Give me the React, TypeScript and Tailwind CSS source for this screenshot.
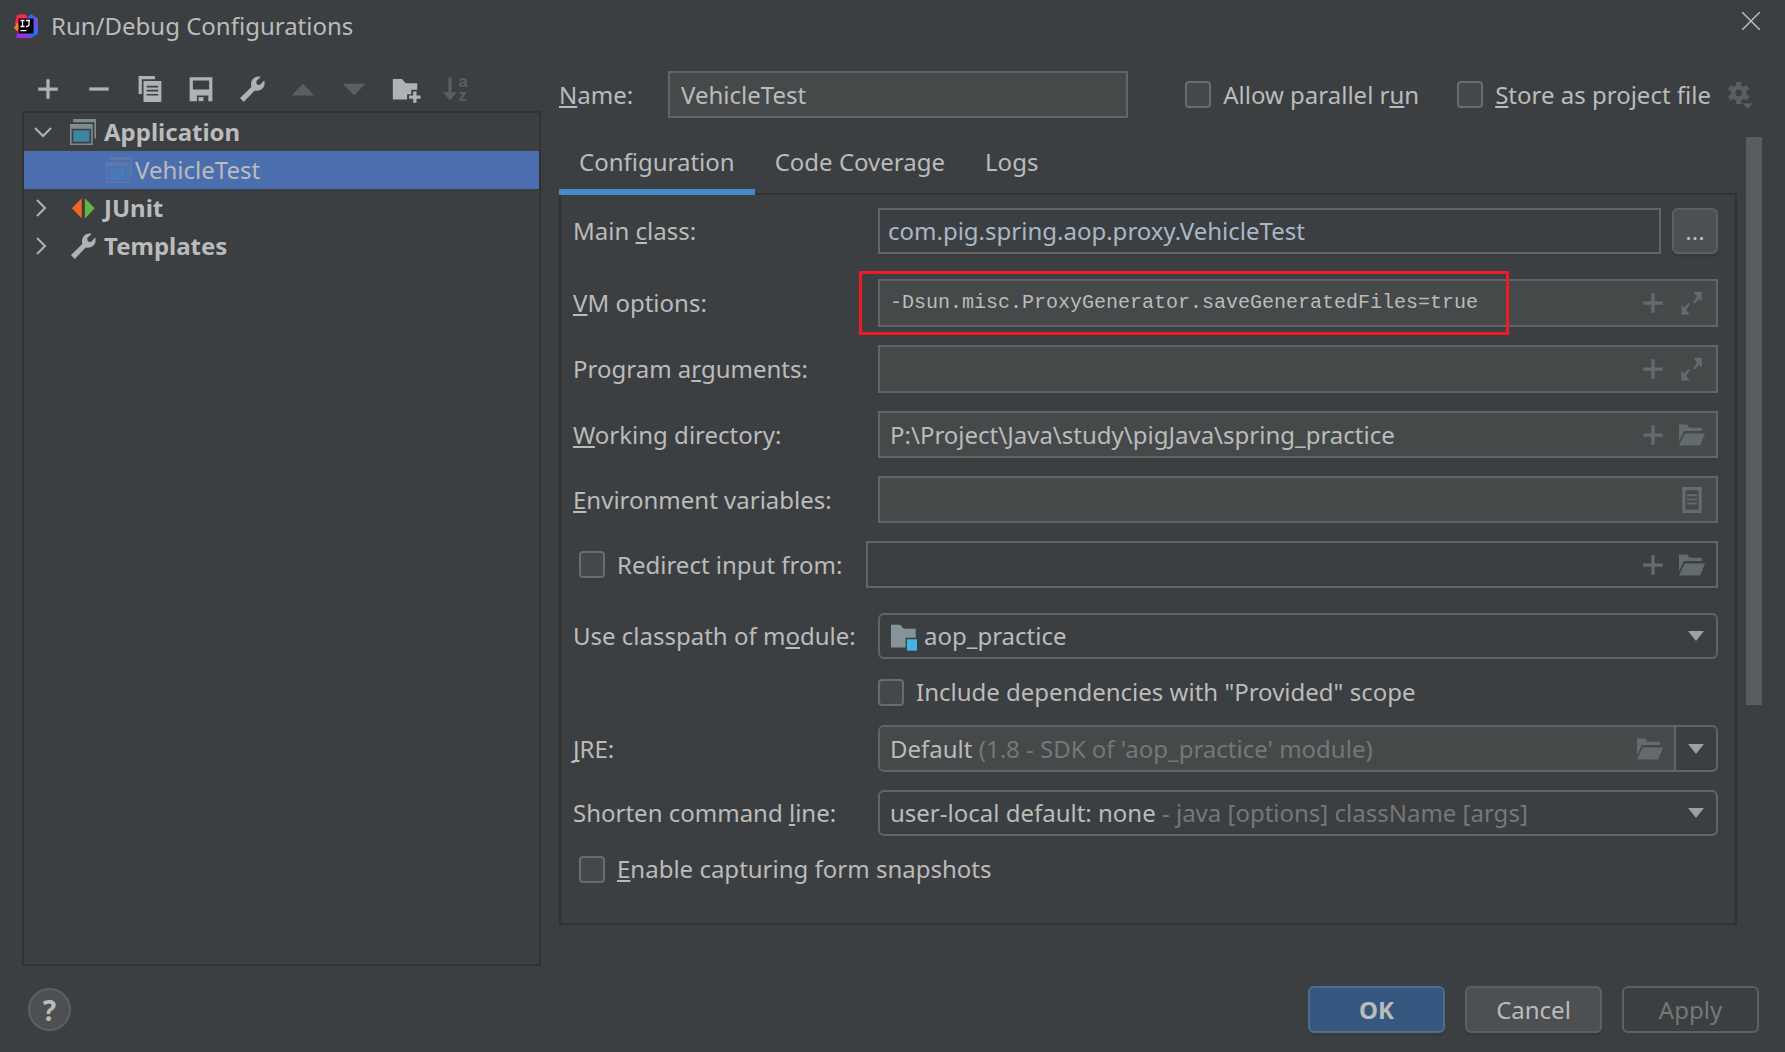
import type { ReactNode } from "react";

const plusPath = "M7 2h2v5h5v2H9v5H7V9H2V7h5z";
const wrenchPath =
  "M.6 13.600 7.600 6.800C7.100 4.900 7.500 3 8.700 1.700 9.900.5 11.700 0 13.400.500L10.600 3.300 11 5.200 12.800 5.600 15.500 2.800C16.100 4.600 15.700 6.500 14.400 7.700 13.100 8.900 11.400 9.300 9.700 8.900L2.900 16z";

function Icon({ className = "w-[26px]", children }: { className?: string; children: ReactNode }) {
  return (
    <svg viewBox="0 0 16 16" className={`h-[26px] shrink-0 overflow-visible ${className}`} fill="currentColor" aria-hidden="true">
      {children}
    </svg>
  );
}

function Logo() {
  return (
    <svg viewBox="0 0 24 24" className="h-6 w-6 shrink-0" aria-hidden="true">
      <path d="M3 1 11 0 15 5 6 14 1 10z" fill="#fe2857" />
      <path d="M0 14 3 9 7 10 8 18 3 17z" fill="#fc801d" />
      <path d="M13 4 17 0 24 5 24 20 17 24 8 20z" fill="#2f6bf0" />
      <path d="M4 16 12 18 17 24 2 24z" fill="#9b30d8" />
      <path d="M20 2 24 5 24 13 19 13z" fill="#7a4ce0" />
      <path d="M4.500 4.500h15v15h-15z" fill="#000" />
      <path d="M6.500 16h6v1.200h-6z" fill="#fff" />
      <path d="M6.500 6.500h4M8.500 6.500v6M6.500 12.500h4M12 6.500h4M15 6.500v4q0 2-3 2" stroke="#fff" strokeWidth="1.300" fill="none" />
    </svg>
  );
}

function AppIcon({ dimmed }: { dimmed?: boolean }) {
  const frame = dimmed ? "#5b78af" : "#7f8b91";
  return (
    <Icon>
      <path d="M2 0h14v12h-1V2H2z" fill={frame} />
      <path d="M0 3h14v13H0zM1 6v9h12V6z" fill={frame} fillRule="evenodd" />
      <path d="M2 7h10v7H2z" fill={dimmed ? "#477ab8" : "#3e86a0"} />
    </Icon>
  );
}

function OpenFolder() {
  return (
    <Icon className="w-7">
      <path d="M0 1.500h5l1.500 2H14v2H3L0 12z" />
      <path d="M3.500 7H16l-3 7.500H0z" />
    </Icon>
  );
}

function Caret() {
  return (
    <svg viewBox="0 0 16 10" className="h-2.5 w-4 shrink-0" fill="#9da0a2" aria-hidden="true">
      <path d="M0 0h16L8 10z" />
    </svg>
  );
}

function IconButton({ label, disabled, children }: { label: string; disabled?: boolean; children: ReactNode }) {
  return (
    <button type="button" aria-label={label} disabled={disabled} className="text-[#afb1b3] disabled:text-[#5c5d5e]">
      <Icon>{children}</Icon>
    </button>
  );
}

const checkboxClass =
  "h-[27px] w-[26px] shrink-0 appearance-none rounded-sm border-2 border-[#6b6b6b] bg-[#43494a]";

function Check({ children }: { children: ReactNode }) {
  return (
    <label className="flex h-9 items-center gap-3 whitespace-nowrap">
      <input type="checkbox" className={checkboxClass} />
      <span>{children}</span>
    </label>
  );
}

const labelClass = "w-[305px] shrink-0 whitespace-nowrap";
const boxClass = "flex min-w-0 flex-1 items-center gap-3 border-2 border-[#646464] pl-2.5 pr-2.5 text-[#636b6f]";

function InlineIcon({ kind }: { kind: "plus" | "expand" | "folder" | "list" }) {
  const labels = { plus: "Insert macro", expand: "Expand", folder: "Browse", list: "Edit variables" };
  return (
    <button type="button" aria-label={labels[kind]}>
      {kind === "folder" ? (
        <OpenFolder />
      ) : (
        <Icon className={kind === "plus" ? "w-[26px]" : "w-7"}>
          {kind === "plus" && <path d={plusPath} />}
          {kind === "expand" && (
            <path d="M9 1h5V7L12.300 5.200 9.700 8.400 8.800 7.500 11.100 4.200zM6.500 15H1.500V9L3.200 10.800 5.800 7.900 6.700 8.800 4.400 12z" />
          )}
          {kind === "list" && (
            <path fillRule="evenodd" d="M2 0h12v16H2zM4 2v12h8V2zM5 4.500h6v1.200H5zM5 7h6v1.200H5zM5 9.500h6v1.200H5z" />
          )}
        </Icon>
      )}
    </button>
  );
}

/** Eine Formularzeile: Label links, Textfeld mit Inline-Icons rechts. */
function FieldRow({
  id,
  label,
  value = "",
  icons,
  height = "h-[47px]",
}: {
  id: string;
  label: ReactNode;
  value?: string;
  icons: Array<"plus" | "expand" | "folder" | "list">;
  height?: string;
}) {
  return (
    <div className={`flex items-stretch ${height}`}>
      <label htmlFor={id} className={`${labelClass} self-center`}>
        {label}
      </label>
      <div className={`${boxClass} bg-[#45494a]`}>
        <input id={id} defaultValue={value} className="min-w-0 flex-1 text-[#bbbbbb] outline-none" />
        {icons.map((k) => (
          <InlineIcon key={k} kind={k} />
        ))}
      </div>
    </div>
  );
}

function Toolbar() {
  return (
    <div className="flex h-11 items-center gap-[25px] pl-[13px]">
      <IconButton label="Add">
        <path d={plusPath} />
      </IconButton>
      <IconButton label="Remove">
        <path d="M2 7h12v2H2z" />
      </IconButton>
      <IconButton label="Copy">
        <path d="M1 0h10v2H3v9H1z" />
        <path fillRule="evenodd" d="M4 3h11v13H4zM6 6v1h7V6zM6 8.500v1h7v-1zM6 11v1h7v-1z" />
      </IconButton>
      <IconButton label="Save">
        <path fillRule="evenodd" d="M1 .8h14v14.700h-2.500v-3.500h-7v3.500H1zM3 2.800v5.500h10V2.800z" />
        <path d="M6.500 13h3v2.500h-3z" />
      </IconButton>
      <IconButton label="Edit templates">
        <path d={wrenchPath} />
      </IconButton>
      <IconButton label="Move up" disabled>
        <path d="M1 12h14L8 4.700z" />
      </IconButton>
      <IconButton label="Move down" disabled>
        <path d="M1 4.700h14L8 12z" />
      </IconButton>
      <IconButton label="New folder">
        <path d="M.5 1.800H6L8.500 4.500h7v4h-3.700v2.800H9.300v3.200H.5z" />
        <path d="M13 9.500h2.100v2.500h2.500v2h-2.500v2.500H13V14h-2.500v-2H13z" />
      </IconButton>
      <IconButton label="Sort" disabled>
        <path d="M3.300 1h2v9H8.500L4.300 15 0 10h3.300z" />
        <text x="9.500" y="6.500" fontSize="10" fontWeight="700" fontFamily="Liberation Sans, sans-serif">a</text>
        <text x="9.500" y="15.500" fontSize="10" fontWeight="700" fontFamily="Liberation Sans, sans-serif">z</text>
      </IconButton>
    </div>
  );
}

function Arrow({ open }: { open?: boolean }) {
  return (
    <svg viewBox="0 0 18 18" className="mr-2.5 h-[18px] w-[18px] shrink-0" fill="none" stroke="#afb1b3" strokeWidth="2" aria-hidden="true">
      <path d={open ? "M1 5l8 8 8-8" : "M3 1l8 8-8 8"} />
    </svg>
  );
}

function Tree() {
  return (
    <ul className="flex-1 border-2 border-[#323232]">
      <li className="flex h-[38px] items-center gap-2 pl-2.5 font-bold">
        <Arrow open />
        <AppIcon />
        Application
      </li>
      <li className="flex h-[38px] items-center gap-[3px] bg-[#4b6eaf] pl-[82px]">
        <AppIcon dimmed />
        VehicleTest
      </li>
      <li className="flex h-[38px] items-center gap-2 pl-2.5 font-bold">
        <Arrow />
        <Icon>
          <path d="M7.200 2v12.500L1.200 8.200z" fill="#f26522" />
          <path d="M9.200 2v12.500l6-6.300z" fill="#62b543" />
        </Icon>
        JUnit
      </li>
      <li className="flex h-[38px] items-center gap-2 pl-2.5 font-bold">
        <Arrow />
        <Icon className="w-[26px] text-[#afb1b3]">
          <path d={wrenchPath} />
        </Icon>
        Templates
      </li>
    </ul>
  );
}

const selectBoxClass = "relative flex min-w-0 flex-1 items-center rounded-md border-2 border-[#646464]";

function ConfigurationPanel() {
  return (
    <div className="flex flex-col border-2 border-t-0 border-[#323232] pb-9 pl-3 pr-[17px] pt-[13px]">
      <div className="flex h-[46px] items-stretch">
        <label htmlFor="main-class" className={`${labelClass} self-center`}>
          Main <u>c</u>lass:
        </label>
        <input
          id="main-class"
          defaultValue="com.pig.spring.aop.proxy.VehicleTest"
          className="min-w-0 flex-1 border-2 border-[#646464] px-2 text-[#a9b7c6] outline-none"
        />
        <button
          type="button"
          aria-label="Choose main class"
          className="ml-[11px] w-[46px] rounded-md border-2 border-[#5e6060] bg-[#4c5052] shadow-[0_3px_0_#37393b]"
        >
          ...
        </button>
      </div>

      <div className="relative mt-[25px]">
        <div className="flex h-12 items-stretch">
          <label htmlFor="vm" className={`${labelClass} self-center`}>
            <u>V</u>M options:
          </label>
          <div className={`${boxClass} bg-[#45494a]`}>
            <input
              id="vm"
              defaultValue="-Dsun.misc.ProxyGenerator.saveGeneratedFiles=true"
              className="min-w-0 flex-1 font-['Liberation_Mono',monospace] text-xl text-[#bbbbbb] outline-none"
            />
            <InlineIcon kind="plus" />
            <InlineIcon kind="expand" />
          </div>
        </div>
        <div className="pointer-events-none absolute -inset-y-2 left-[286px] w-[650px] border-[3px] border-[#ed1c24]" />
      </div>

      <div className="mt-[18px] flex flex-col gap-[18px]">
        <FieldRow id="args" label={<>Program a<u>r</u>guments:</>} icons={["plus", "expand"]} height="h-12" />
        <FieldRow
          id="dir"
          label={<><u>W</u>orking directory:</>}
          value="P:\Project\Java\study\pigJava\spring_practice"
          icons={["plus", "folder"]}
        />
        <FieldRow id="env" label={<><u>E</u>nvironment variables:</>} icons={["list"]} />
        <div className="flex h-[47px] items-stretch pl-1.5">
          <div className="mr-6 flex items-center">
            <Check>Redirect input from:</Check>
          </div>
          <div className={boxClass}>
            <input aria-label="Redirect input from" className="min-w-0 flex-1 text-[#bbbbbb] outline-none" />
            <InlineIcon kind="plus" />
            <InlineIcon kind="folder" />
          </div>
        </div>
      </div>

      <div className="mt-[25px] flex h-[46px] items-stretch">
        <label htmlFor="module" className={`${labelClass} self-center`}>
          Use classpath of m<u>o</u>dule:
        </label>
        <div className={`${selectBoxClass} pl-2.5 pr-3`}>
          <Icon className="mr-1.5 w-7">
            <path d="M0 1h5.500L8 3.500h7.200V9H9v6H0z" fill="#87939a" />
            <path d="M9.800 10H16v7H9.800z" fill="#40b6e0" />
          </Icon>
          <select id="module" className="min-w-0 flex-1 appearance-none outline-none">
            <option>aop_practice</option>
          </select>
          <Caret />
        </div>
      </div>

      <div className="my-[15px] pl-[305px]">
        <Check>Include dependencies with "Provided" scope</Check>
      </div>

      <div className="flex h-[47px] items-stretch">
        <label htmlFor="jre" className={`${labelClass} self-center`}>
          <u>J</u>RE:
        </label>
        <div className={selectBoxClass}>
          <div className="flex flex-1 items-center self-stretch rounded-l-sm bg-[#45494a] px-2.5 text-[#636b6f]">
            <span className="mr-auto text-[#bbbbbb]">
              Default <span className="text-[#777777]">(1.8 - SDK of 'aop_practice' module)</span>
            </span>
            <OpenFolder />
          </div>
          <div className="flex items-center self-stretch border-l-2 border-[#646464] px-3">
            <Caret />
          </div>
          {/* natives select liegt unsichtbar über der zweifarbigen Anzeige */}
          <select id="jre" className="absolute inset-0 appearance-none opacity-0">
            <option value="default" aria-label="Default" />
          </select>
        </div>
      </div>

      <div className="mt-[18px] flex h-[46px] items-stretch">
        <label htmlFor="shorten" className={`${labelClass} self-center`}>
          Shorten command <u>l</u>ine:
        </label>
        <div className={`${selectBoxClass} pl-2.5 pr-3`}>
          <span className="mr-auto">
            user-local default: none <span className="text-[#777777]">- java [options] className [args]</span>
          </span>
          <Caret />
          <select id="shorten" className="absolute inset-0 appearance-none opacity-0">
            <option value="none" aria-label="user-local default: none" />
          </select>
        </div>
      </div>

      <div className="mt-[15px] pl-1.5">
        <Check>
          <u>E</u>nable capturing form snapshots
        </Check>
      </div>
    </div>
  );
}

const tabs = ["Configuration", "Code Coverage", "Logs"];

export default function App() {
  return (
    <div className="flex min-h-screen flex-col bg-[#3c3f41] font-['Noto_Sans',sans-serif] text-2xl text-[#bbbbbb] [&_u]:decoration-2 [&_u]:underline-offset-2 [&_u]:[text-decoration-skip-ink:none]">
      <header className="flex h-[52px] items-center pl-3.5 pr-[25px]">
        <Logo />
        <h1 className="ml-[13px] mr-auto">Run/Debug Configurations</h1>
        <button type="button" aria-label="Close" className="self-start pt-3">
          <svg viewBox="0 0 18 18" className="h-[18px] w-[18px]" stroke="#bbbbbb" strokeWidth="1.500" aria-hidden="true">
            <path d="M0 0l18 18M18 0 0 18" />
          </svg>
        </button>
      </header>

      <main className="flex flex-1 pl-[22px] pr-[23px]">
        <aside className="mt-[15px] flex w-[519px] shrink-0 flex-col">
          <Toolbar />
          <Tree />
        </aside>

        <section className="ml-[18px] min-w-0 flex-1">
          <div className="mt-[19px] flex h-[47px] items-center pr-[9px]">
            <label htmlFor="name" className="w-[109px] shrink-0">
              <u>N</u>ame:
            </label>
            <input
              id="name"
              defaultValue="VehicleTest"
              className="h-full w-[460px] border-2 border-[#646464] bg-[#45494a] px-[11px] outline-none"
            />
            <div className="ml-auto flex items-center">
              <Check>
                Allow parallel r<u>u</u>n
              </Check>
              <div className="ml-[38px] mr-4">
                <Check>
                  <u>S</u>tore as project file
                </Check>
              </div>
              <IconButton label="Storage options" disabled>
                <path
                  fillRule="evenodd"
                  d="M5.600 0h3.200v2.100l1.500.9 1.900-1.100 1.600 2.700-1.900 1.100v1.900l1.900 1.100-1.600 2.700-1.900-1.100-1.500.9v2.300H5.600v-2.300l-1.500-.9-1.900 1.100L.6 8.700l1.900-1.100V5.700L.6 4.600l1.600-2.700L4.100 3l1.500-.9zM7.200 4.600a2 2.100 0 1 0 0 4.200 2 2.100 0 0 0 0-4.200z"
                />
                <path d="M9.500 13H16l-3.200 3.500z" />
              </IconButton>
            </div>
          </div>

          <div className="mt-[19px] flex">
            <div className="min-w-0 flex-1">
              <div role="tablist" className="flex h-[58px] items-end border-b-2 border-[#323232]">
                {tabs.map((tab, i) => (
                  <button
                    key={tab}
                    type="button"
                    role="tab"
                    aria-selected={i === 0}
                    className="-mb-0.5 h-[58px] border-b-[6px] border-transparent px-5 pb-0.5 aria-selected:border-[#4a88c7]"
                  >
                    {tab}
                  </button>
                ))}
              </div>
              <ConfigurationPanel />
            </div>
            <div className="ml-[9px] h-[568px] w-4 bg-[#5a5b5d]" />
          </div>
        </section>
      </main>

      <footer className="flex items-center gap-5 pb-[19px] pl-7 pr-[26px] pt-5">
        <button
          type="button"
          aria-label="Help"
          className="mr-auto h-[43px] w-[43px] rounded-full border-2 border-[#5e6060] bg-[#4c5052] text-[28px] font-bold leading-none"
        >
          ?
        </button>
        <button type="button" className="h-[47px] w-[137px] rounded-md border-2 border-[#4c708c] bg-[#365880] font-bold shadow-[0_3px_0_#37393b]">
          OK
        </button>
        <button type="button" className="h-[47px] w-[137px] rounded-md border-2 border-[#5e6060] bg-[#4c5052] shadow-[0_3px_0_#37393b]">
          Cancel
        </button>
        <button type="button" disabled className="h-[47px] w-[137px] rounded-md border-2 border-[#5e6060] text-[#777777]">
          Apply
        </button>
      </footer>
    </div>
  );
}
